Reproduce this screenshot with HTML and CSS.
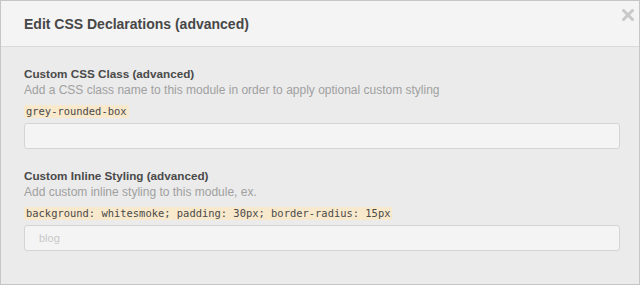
FILE: index.html
```html
<!DOCTYPE html>
<html lang="en">
<head>
  <meta charset="UTF-8" />
  <title>Edit CSS Declarations</title>
  <link rel="stylesheet" href="styles.css">
</head>
<body>

<div class="modal">
  <div class="modal-header">
    <h2 class="modal-title">Edit CSS Declarations (advanced)</h2>
    <a href="#" class="close-button" aria-label="Close">
      <svg width="12" height="12" viewBox="0 0 12 12">
        <path d="M1.5 1.5 L10.5 10.5 M10.5 1.5 L1.5 10.5" stroke="#c9c9c9" stroke-width="3" stroke-linecap="square" fill="none"/>
      </svg>
    </a>
  </div>

  <div class="modal-body">
    <div class="form-group">
      <label class="form-label" for="cssClass">Custom CSS Class (advanced)</label>
      <div class="form-help">Add a CSS class name to this module in order to apply optional custom styling</div>
      <div class="form-example"><code>grey-rounded-box</code></div>
      <input type="text" id="cssClass" class="form-input">
    </div>

    <div class="form-group">
      <label class="form-label" for="cssInline">Custom Inline Styling (advanced)</label>
      <div class="form-help">Add custom inline styling to this module, ex.</div>
      <div class="form-example"><code>background: whitesmoke; padding: 30px; border-radius: 15px</code></div>
      <input type="text" id="cssInline" class="form-input" placeholder="blog">
    </div>
  </div>
</div>

</body>
</html>
```

FILE: styles.css
```css
* {
  margin: 0; padding: 0; box-sizing: border-box;
}

body {
  font-family: "Liberation Sans", Arial, Helvetica, sans-serif;
  background: #ebebeb;
  color: #444;
}

.modal {
  position: relative;
  width: 640px;
  height: 285px;
  border: 1px solid #c6c6c6;
  background: #ebebeb;
}

.modal-header {
  background: #f4f4f4;
  border-bottom: 1px solid #dadada;
  padding: 14px 24px 13px 23px;
}

.modal-title {
  font-size: 14px;
  line-height: 18px;
  font-weight: bold;
  color: #474747;
}

.close-button {
  position: absolute;
  top: 8px;
  right: 5px;
  display: block;
  width: 12px;
  height: 12px;
}

.close-button svg {
  display: block;
}

.modal-body {
  padding: 19px 19px 0 23px;
}

.form-group {
  margin-bottom: 19px;
}

.form-label {
  display: block;
  font-size: 11.7px;
  line-height: 16px;
  font-weight: bold;
  color: #4a4a4a;
}

.form-help {
  font-size: 12px;
  line-height: 16px;
  color: #a0a0a0;
}

.form-example {
  margin-top: 5px;
  height: 13px;
  line-height: 13px;
}

.form-example code {
  display: inline-block;
  font-family: "DejaVu Sans Mono", "Liberation Mono", monospace;
  font-size: 10.45px;
  line-height: 13px;
  padding: 0 2px;
  background: #f8e8cc;
  color: #4a4a4a;
  border-radius: 2px;
}

.form-input {
  display: block;
  width: 100%;
  height: 26px;
  margin-top: 7px;
  padding: 0 14px;
  border: 1px solid #d4d4d4;
  border-radius: 3px;
  background: #f4f4f4;
  font-family: "Liberation Sans", Arial, sans-serif;
  font-size: 11px;
  color: #444;
  outline: none;
}

.form-input::placeholder {
  color: #c8c8c8;
}
```
